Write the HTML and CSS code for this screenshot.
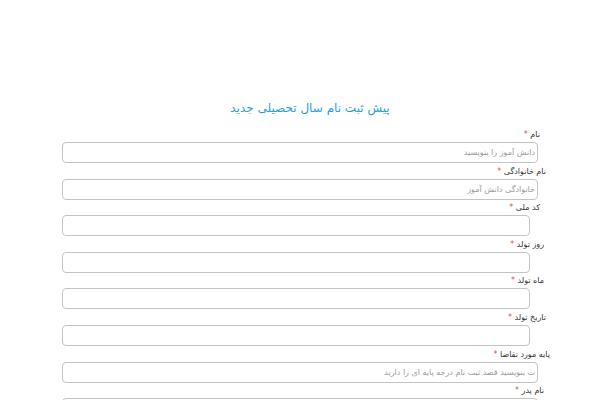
FILE: index.html
```html
<!DOCTYPE html>
<html lang="fa" dir="rtl">
<head>
<meta charset="utf-8">
<title>پیش ثبت نام</title>
<link rel="stylesheet" href="styles.css">
</head>
<body>
<h1 class="title">پیش ثبت نام سال تحصیلی جدید</h1>
<form class="form">
  <div class="row r1">
    <label class="label">نام <span class="req">*</span></label>
    <input class="field wide" type="text" placeholder="دانش آموز را بنویسید">
  </div>
  <div class="row r2">
    <label class="label">نام خانوادگی <span class="req">*</span></label>
    <input class="field wide" type="text" placeholder="خانوادگی دانش آموز">
  </div>
  <div class="row r3">
    <label class="label">کد ملی <span class="req">*</span></label>
    <input class="field narrow" type="text">
  </div>
  <div class="row r4">
    <label class="label">روز تولد <span class="req">*</span></label>
    <input class="field narrow" type="text">
  </div>
  <div class="row r5">
    <label class="label">ماه تولد <span class="req">*</span></label>
    <input class="field narrow" type="text">
  </div>
  <div class="row r6">
    <label class="label">تاریخ تولد <span class="req">*</span></label>
    <input class="field narrow" type="text">
  </div>
  <div class="row r7">
    <label class="label">پایه مورد تقاضا <span class="req">*</span></label>
    <input class="field wide" type="text" placeholder="ت بنویسید قصد ثبت نام درجه پایه ای را دارید">
  </div>
  <div class="row r8">
    <label class="label">نام پدر <span class="req">*</span></label>
    <input class="field wide" type="text">
  </div>
</form>
</body>
</html>
```
FILE: styles.css
```css
html, body {
  margin: 0;
  padding: 0;
  background: #ffffff;
}
body {
  font-family: "DejaVu Sans", sans-serif;
  direction: rtl;
}
.title {
  margin: 100px 0 11px 0;
  padding: 0 0 0 20px;
  font-size: 12px;
  line-height: 16px;
  letter-spacing: 1px;
  font-weight: normal;
  color: #2a9fd6;
  text-align: center;
}
.form {
  margin: 0 auto 0 62px;
  width: 484px;
  display: flex;
  flex-direction: column;
}
.row {
  display: flex;
  flex-direction: column;
  align-items: stretch;
  margin-bottom: 0.6px;
}
.label {
  display: block;
  font-size: 8px;
  line-height: 15px;
  letter-spacing: 1px;
  color: #333333;
  text-align: right;
}
.req {
  color: #d9534f;
}
.r1 .label { padding-right: 6px; }
.r2 .label { padding-right: 0; }
.r3 .label { padding-right: 6px; }
.r4 .label { padding-right: 2px; }
.r5 .label { padding-right: 2px; }
.r6 .label { padding-right: 0; }
.r7 .label { padding-right: 0; margin-right: -4px; }
.r8 .label { padding-right: 2px; }
.field {
  box-sizing: border-box;
  height: 21px;
  border: 1px solid #c4c4c4;
  border-radius: 4px;
  background: #ffffff;
  font-family: "DejaVu Sans", sans-serif;
  font-size: 8px;
  letter-spacing: 1px;
  padding: 0 2px 0 4px;
  direction: rtl;
  outline: none;
}
.field::placeholder {
  color: #9a9a9a;
}
.wide {
  width: 476px;
  margin-left: 0;
  margin-right: auto;
}
.narrow {
  width: 468px;
  margin-left: 0;
  margin-right: auto;
}
```
